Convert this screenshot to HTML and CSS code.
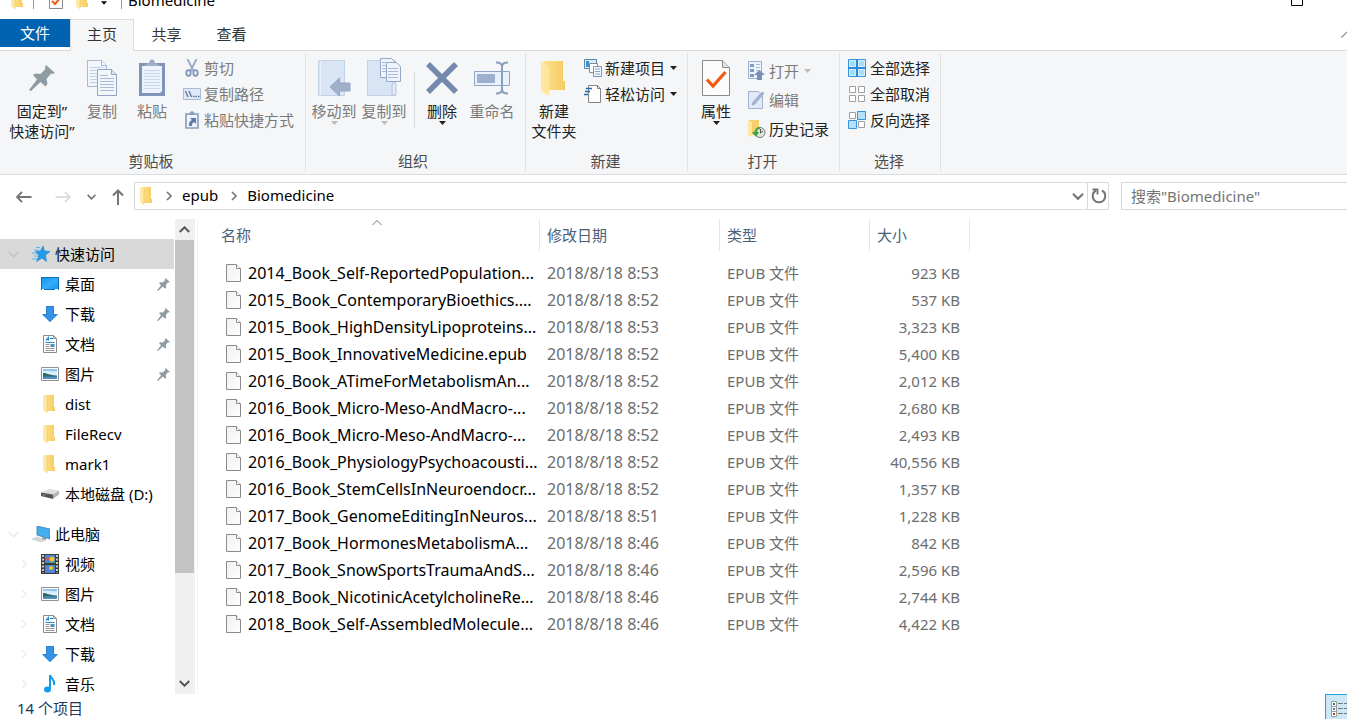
FILE: index.html
```
<!DOCTYPE html>
<html lang="zh-CN">
<head>
<meta charset="utf-8">
<title>Biomedicine</title>
<link rel="stylesheet" href="styles.css">
</head>
<body>
<svg class="sprite" aria-hidden="true">
  <defs>
    <linearGradient id="gold" x1="0" x2="1"><stop offset="0" stop-color="#ffe08a"/><stop offset="1" stop-color="#f4cc62"/></linearGradient>
    <linearGradient id="blue" x1="0" x2="1" y1="0" y2="1"><stop offset="0" stop-color="#0a93f0"/><stop offset=".5" stop-color="#35acf8"/><stop offset="1" stop-color="#1496f2"/></linearGradient>
    <linearGradient id="page" x1="0" x2="1" y1="0" y2="1"><stop offset="0" stop-color="#f0f1f2"/><stop offset="1" stop-color="#fdfdfd"/></linearGradient>
  </defs>
  <symbol id="folder" viewBox="0 0 12 18"><path d="M2 0h9v12h1v4H4z" fill="url(#gold)"/><path d="M0 0l4 2.500v15.500L0 15.500z" fill="#ffe9a6"/><path d="M4 2.500V18" stroke="#efc75c" stroke-width=".6"/></symbol>
  <symbol id="pin" viewBox="0 0 26 26"><path d="M17 0l9 8-2.500 1-1.500-.5-4.500 5.500 1 5-2 2.500-5-4.500L2 26l-2-1 8-10.500L4 10l2.500-1.500 5 .5 5-5-.5-2z" fill="#8f9ba3"/></symbol>
  <symbol id="file" viewBox="0 0 15 18"><path d="M.5.500h10l4 4v13H.500z" fill="url(#page)" stroke="#8b8b8b"/><path d="M10.500.500v4h4" fill="#fff" stroke="#8b8b8b"/></symbol>
  <symbol id="down" viewBox="0 0 16 16"><path d="M4 0h8v8h4l-8 8-8-8h4z" fill="#3393e6"/><path d="M4.500.500h7v8h3.500l-7 7-7-7h3.500z" fill="none" stroke="#2a80cd"/></symbol>
  <symbol id="doc" viewBox="0 0 16 18"><path d="M1.500.500h10l3 3v14h-13z" fill="#fff" stroke="#8c8c8c"/><path d="M11.500.500v3h3" fill="none" stroke="#8c8c8c"/><path d="M4 5.500l2.500-3v3M8 3.500h3M3.500 7.500h9" fill="none" stroke="#1e88da" stroke-width="1.200"/><path d="M3.500 9.500h4M3.500 11.500h4M3.500 13.500h9M3.500 15.500h9" stroke="#9a9a9a"/><path d="M8.500 9h4v3h-4z" fill="#4c8fb9"/></symbol>
  <symbol id="picture" viewBox="0 0 18 14"><path d="M.5.500h17v13H.500z" fill="#fff" stroke="#929292"/><path d="M2 2h14v10H2z" fill="#8cc3f2"/><path d="M2 4c6-1 9 1 14 0v4H2z" fill="#d9effd"/><path d="M2 6c4 0 6 2 14 3v2H2z" fill="#2f6b66"/><path d="M2 10c5-1 9 0 14-.5V12H2z" fill="#508fc2"/></symbol>
  <symbol id="copy" viewBox="0 0 30 36"><g fill="#f1f5fc" stroke="#a6b7d2"><path d="M.5.500h14l5 5v21H.500z"/><path d="M14.500.500v5h5"/></g><path d="M3 7.500h13M3 10.500h13M3 13.500h13M3 16.500h9M3 19.500h9M3 22.500h9" stroke="#c2d0e5"/><path d="M10.500 9.500h14l5 5v21h-19z" fill="#f1f5fc" stroke="#91a5c5"/><path d="M24.500 9.500v5h5" fill="#dbe5f4" stroke="#91a5c5"/><path d="M13 15.500h8M13 18.500h14M13 21.500h14M13 24.500h14M13 27.500h14M13 30.500h14" stroke="#aabbd6"/></symbol>
  <symbol id="check" viewBox="0 0 28 36"><path d="M.5.500h20l7 7v28H.500z" fill="#fcfcfc" stroke="#8a8a8a"/><path d="M20.500.500v7h7" fill="#e4e4e4" stroke="#8a8a8a"/><path d="M5 19.500l6 6.500L23.500 12" fill="none" stroke="#ee5a12" stroke-width="3.200"/></symbol>
  <symbol id="tri" viewBox="0 0 7 4"><path d="M0 0h7L3.500 4z" fill="currentColor"/></symbol>
  <symbol id="chev" viewBox="0 0 10 6"><path d="M.7.700L5 5 9.300.700" fill="none" stroke="currentColor" stroke-width="1.800"/></symbol>
  <symbol id="next" viewBox="0 0 6 10"><path d="M1 1l4 4-4 4" fill="none" stroke="currentColor" stroke-width="1.700"/></symbol>
</svg>

<div class="window">
  <header class="titlebar">
    <svg class="folder-sm"><use href="#folder"/></svg>
    <i class="bar"></i>
    <button class="plain" aria-label="属性"><svg width="14" height="18" viewBox="0 0 14 18"><path d="M.5.500h13v17H.500z" fill="#fcfcfc" stroke="#8a8a8a"/><path d="M3 10l3 3 5.500-6.500" fill="none" stroke="#ee5a12" stroke-width="2"/></svg></button>
    <button class="plain" aria-label="新建文件夹"><svg class="folder-sm"><use href="#folder"/></svg></button>
    <button class="plain" aria-label="自定义快速访问工具栏"><svg class="quick-tri"><use href="#tri"/></svg></button>
    <i class="bar bar-last"></i>
    <h1>Biomedicine</h1>
    <button class="plain maximize" aria-label="最大化"><svg width="12" height="12"><path d="M.5.500h11v11H.500z" fill="none" stroke="#000"/></svg></button>
  </header>

  <nav class="tabs">
    <button class="tab tab-file">文件</button>
    <button class="tab tab-active">主页</button>
    <button class="tab">共享</button>
    <button class="tab">查看</button>
    <button class="plain collapse" aria-label="最小化功能区"><svg width="12" height="7"><path d="M.5 6.500l6-6 6 6" fill="none" stroke="#888" stroke-width="1.200"/></svg></button>
  </nav>

  <section class="ribbon">
    <div class="group group-clip">
      <div class="tools">
        <button class="big big-wide"><span class="pic"><svg width="26" height="26"><use href="#pin"/></svg></span><span>固定到”<br>快速访问”</span></button>
        <button class="big dim"><span class="pic"><svg width="30" height="36"><use href="#copy"/></svg></span><span>复制</span></button>
        <button class="big dim"><span class="pic"><svg width="26" height="37" viewBox="0 0 26 37"><path d="M0 4h26v33H0z" fill="#8093b8"/><path d="M3 7h20v25l-2 2H3z" fill="#edf3fc"/><path d="M5 11.500h16M5 14.500h16M5 17.500h16M5 20.500h16M5 23.500h16M5 26.500h16M5 29.500h16" stroke="#ccd8ea"/><path d="M5 7l4-3h1a3 3 0 0 1 6 0h1l4 3z" fill="#a2afc9"/><circle cx="13" cy="2.500" r="2" fill="#98a7c3"/></svg></span><span>粘贴</span></button>
        <div class="small-list">
          <button class="small dim"><svg width="18" height="18" viewBox="0 0 18 18"><path d="M4.500 0L10.500 12M13.500 0L7.500 12" fill="none" stroke="#98a9c7" stroke-width="1.800"/><ellipse cx="5.500" cy="14" rx="2.200" ry="2.800" fill="none" stroke="#7f94b9" stroke-width="1.800"/><ellipse cx="12.500" cy="14" rx="2.200" ry="2.800" fill="none" stroke="#7f94b9" stroke-width="1.800"/></svg>剪切</button>
          <button class="small dim"><svg width="18" height="12" viewBox="0 0 18 12"><path d="M.5.500h17v11H.500z" fill="#dfe9f8" stroke="#a9bad5"/><path d="M2.500 3l2.500 6M6 3l2.500 6M10 8.500h1.500M12.500 8.500H14M15 8.500h1.500" stroke="#5f7597" stroke-width="1.300"/></svg>复制路径</button>
          <button class="small dim"><svg width="18" height="18" viewBox="0 0 18 18"><path d="M3 3h12v14H3z" fill="#edf3fc" stroke="#899bbd" stroke-width="1.600"/><path d="M6.500 1.500h5V4h-5z" fill="#899bbd"/><circle cx="9" cy="1.500" r="1.500" fill="#899bbd"/><path d="M6 15c0-4 1-5 3-6L7 7h6v6l-2-2c-2 1-2 2-2 4z" fill="#5d79a8"/></svg>粘贴快捷方式</button>
        </div>
      </div>
      <div class="group-name">剪贴板</div>
    </div>

    <div class="group group-pad">
      <div class="tools">
        <button class="big dim"><span class="pic"><svg width="33" height="38" viewBox="0 0 33 38"><path d="M.5 1.500h26v35H.500z" fill="#d9e4f4" stroke="#c3d1e6"/><path d="M2.500 2v34" stroke="#edf3fb"/><path d="M12 28l9.500-9v5H32v8H21.500v5z" fill="#a0b0cb" stroke="#95a7c5"/></svg></span><span>移动到</span><svg class="tri"><use href="#tri"/></svg></button>
        <button class="big dim"><span class="pic"><svg width="34" height="39" viewBox="0 0 34 39"><path d="M.5 2.500h28v35H.500z" fill="#d9e4f4" stroke="#c3d1e6"/><path d="M25 37V26l2-2 2 2v11z" fill="#e1eaf6" stroke="#b3c4dd"/><g fill="#eff4fc" stroke="#94a8c8"><path d="M13.500.500h11l4 4v15h-15z"/><path d="M19.500 4.500h10l4 4v15h-14z"/></g><path d="M21 10.500h10M21 13.500h10M21 16.500h10M21 19.500h10M15 4.500h5M15 7.500h4M15 10.500h4M15 13.500h4" stroke="#aabbd6"/></svg></span><span>复制到</span><svg class="tri"><use href="#tri"/></svg></button>
        <i class="tool-rule"></i>
        <button class="big"><span class="pic"><svg width="32" height="32" viewBox="0 0 32 32"><path d="M2 2l28 28M30 2L2 30" stroke="#7588ad" stroke-width="5.500"/></svg></span><span>删除</span><svg class="tri"><use href="#tri"/></svg></button>
        <button class="big dim"><span class="pic"><svg width="36" height="34" viewBox="0 0 36 34"><path d="M.5 10.500h35v14H.500z" fill="#e9f1fc" stroke="#90a4c4"/><path d="M3 13h18v9H3z" fill="#9fb0cc"/><path d="M22 1.500c4 0 6 1 6 4v23c0 3-2 4-6 4M34 1.500c-4 0-6 1-6 4v23c0 3 2 4 6 4" fill="none" stroke="#8b9ebf" stroke-width="2"/></svg></span><span>重命名</span></button>
      </div>
      <div class="group-name">组织</div>
    </div>

    <div class="group group-new">
      <div class="tools">
        <button class="big big-mid"><span class="pic"><svg width="26" height="36" viewBox="0 0 26 36"><path d="M3 1h19v20h2v9H8z" fill="url(#gold)"/><path d="M0 1l8 5v30l-8-5z" fill="#ffe69c"/></svg></span><span>新建<br>文件夹</span></button>
        <div class="small-list">
          <button class="small"><svg width="18" height="18" viewBox="0 0 18 18"><path d="M.5.500h12v9H.500z" fill="#d9ecfa" stroke="#5e87a5"/><path d="M2 2h3v6H2z" fill="#3d8fc5"/><path d="M5.500 4.500h8v9h-8z" fill="#fff" stroke="#8a8a8a"/><path d="M9.500 7.500h8v10h-8z" fill="#f5faff" stroke="#8193ae"/><path d="M11 10h5M11 12.500h5M11 15h5" stroke="#7aa4d0"/></svg>新建项目<svg class="tri-side"><use href="#tri"/></svg></button>
          <button class="small"><svg width="18" height="18" viewBox="0 0 18 18"><path d="M4.500.500h9l3 3v14h-12z" fill="#fff" stroke="#858585"/><path d="M13.500.500v3h3" fill="none" stroke="#858585"/><path d="M2 3.500h6M1 6.500h5M0 9.500h4" stroke="#1b6cb5" stroke-width="1.500"/></svg>轻松访问<svg class="tri-side"><use href="#tri"/></svg></button>
        </div>
      </div>
      <div class="group-name">新建</div>
    </div>

    <div class="group">
      <div class="tools">
        <button class="big big-mid"><span class="pic"><svg width="28" height="36"><use href="#check"/></svg></span><span>属性</span><svg class="tri"><use href="#tri"/></svg></button>
        <div class="small-list tall">
          <button class="small dim"><svg width="18" height="20" viewBox="0 0 18 20"><path d="M.5.500h13v17H.500z" fill="#edf3fc" stroke="#9cb0cf"/><path d="M2 3h4v3H2zM2 8h4v3H2zM2 13h4v3H2z" fill="#8298bd"/><path d="M8 3.500h4M8 6.500h4M8 9.500h3" stroke="#a8b9d4"/><path d="M11.500 9l5.500 5h-3v5H9v-5H6z" fill="#788fb7"/></svg>打开<svg class="tri-side"><use href="#tri"/></svg></button>
          <button class="small dim"><svg width="18" height="18" viewBox="0 0 18 18"><path d="M.5.500h10l4 4v13H.500z" fill="#e2eaf7" stroke="#9fb2cf"/><path d="M4 14l1-3L14 1l2 1.500L7 13z" fill="#a5b6d1" stroke="#8ca0c1" stroke-width=".6"/></svg>编辑</button>
          <button class="small"><svg width="18" height="18" viewBox="0 0 18 18"><path d="M1 0h10v15H4z" fill="#f5cf6c"/><path d="M0 0l4 2v15l-4-2z" fill="#ffe69c"/><circle cx="12" cy="12.500" r="5" fill="#e4e4e4" stroke="#777"/><path d="M12.500 9v4l2.500-2" fill="none" stroke="#555"/><path d="M12 7c-3 0-5 2-5 5H4l4 5 3-5H9c0-2 1-3 3-3z" fill="#3ba53d"/></svg>历史记录</button>
        </div>
      </div>
      <div class="group-name">打开</div>
    </div>

    <div class="group">
      <div class="tools tools-select">
        <div class="small-list">
          <button class="small"><svg width="18" height="18" viewBox="0 0 18 18"><path d="M.5.500h17v17H.500z" fill="#a9dcfb" stroke="#3793dc"/><path d="M9 0v18M0 9h18" stroke="#2b8bd8" stroke-width="2"/><path d="M1.500 1.500h6v6h-6zM10.500 1.500h6v6h-6zM1.500 10.500h6v6h-6zM10.500 10.500h6v6h-6z" fill="none" stroke="#d5effe"/></svg>全部选择</button>
          <button class="small"><svg width="18" height="18" viewBox="0 0 18 18"><path d="M1.500 1.500h6v6h-6zM10.500 1.500h6v6h-6zM1.500 10.500h6v6h-6zM10.500 10.500h6v6h-6z" fill="#fff" stroke="#a0a0a0"/></svg>全部取消</button>
          <button class="small"><svg width="18" height="18" viewBox="0 0 18 18"><path d="M1.500 1.500h6v6h-6zM10.500 10.500h6v6h-6z" fill="#fff" stroke="#a0a0a0"/><path d="M9.500.500h8v8h-8zM.5 9.500h8v8h-8z" fill="#b5e1fc" stroke="#3793dc"/></svg>反向选择</button>
        </div>
      </div>
      <div class="group-name">选择</div>
    </div>
  </section>

  <section class="location">
    <div class="history">
      <button class="plain" aria-label="后退"><svg width="16" height="12" viewBox="0 0 16 12"><path d="M6 1L1 6l5 5M1 6h14.500" fill="none" stroke="#747474" stroke-width="1.800"/></svg></button>
      <button class="plain forward" aria-label="前进"><svg width="16" height="12" viewBox="0 0 16 12"><path d="M10 1l5 5-5 5M15 6H.500" fill="none" stroke="#dedede" stroke-width="1.800"/></svg></button>
      <button class="plain grey" aria-label="最近位置"><svg width="9" height="6"><use href="#chev"/></svg></button>
      <button class="plain" aria-label="上移"><svg width="12" height="16" viewBox="0 0 12 16"><path d="M1 6.500l5-5 5 5M6 1.500V16" fill="none" stroke="#747474" stroke-width="2"/></svg></button>
    </div>
    <div class="address">
      <svg class="folder-sm"><use href="#folder"/></svg>
      <svg class="next"><use href="#next"/></svg>
      <button class="plain crumb">epub</button>
      <svg class="next"><use href="#next"/></svg>
      <button class="plain crumb">Biomedicine</button>
      <button class="plain grey expand" aria-label="展开"><svg width="12" height="7"><use href="#chev"/></svg></button>
      <button class="plain refresh" aria-label="刷新"><svg width="16" height="16" viewBox="0 0 16 16"><path d="M11 2.500a6.300 6.300 0 1 1-6 0" fill="none" stroke="#747474" stroke-width="2"/><path d="M1.500 1.500H6.500v5" fill="none" stroke="#747474" stroke-width="1.800"/></svg></button>
    </div>
    <input class="search" type="text" aria-label="搜索" placeholder='搜索"Biomedicine"'>
  </section>

  <main class="content">
    <aside class="side">
      <ul class="tree">
        <li><a class="node root selected" href="#"><svg class="fold" width="11" height="7"><use href="#chev"/></svg><svg width="18" height="16" viewBox="0 0 18 16"><path d="M11 0l1.500 5 5.500.5-4.500 3.500 1 6.500-4.500-3.500L4.500 15.500 7 9.500 3.500 5.500l5-.5z" fill="#239be9" stroke="#1a7ecb" stroke-width=".6"/><path d="M4 1.500h4M2 4h5M0 7h5M2 10h4M0 13h5" stroke="#5ab4ec"/></svg>快速访问</a></li>
        <li><a class="node" href="#"><svg width="18" height="14" viewBox="0 0 18 14"><path d="M0 0h18v13H0z" fill="url(#blue)"/><path d="M.5.500h17v12H.500z" fill="none" stroke="#0a70bd"/><path d="M1 12.500h2M14 12.500h3" stroke="#fff"/></svg>桌面<svg class="pinned"><use href="#pin"/></svg></a></li>
        <li><a class="node" href="#"><svg width="18" height="16"><use href="#down"/></svg>下载<svg class="pinned"><use href="#pin"/></svg></a></li>
        <li><a class="node" href="#"><svg width="18" height="18"><use href="#doc"/></svg>文档<svg class="pinned"><use href="#pin"/></svg></a></li>
        <li><a class="node" href="#"><svg width="18" height="14"><use href="#picture"/></svg>图片<svg class="pinned"><use href="#pin"/></svg></a></li>
        <li><a class="node" href="#"><svg class="tree-folder"><use href="#folder"/></svg>dist</a></li>
        <li><a class="node" href="#"><svg class="tree-folder"><use href="#folder"/></svg>FileRecv</a></li>
        <li><a class="node" href="#"><svg class="tree-folder"><use href="#folder"/></svg>mark1</a></li>
        <li><a class="node" href="#"><svg width="18" height="10" viewBox="0 0 18 10"><path d="M0 3.500L8 0l10 1.500-6 4z" fill="#dedede"/><path d="M0 3.500l12 2V10L0 7z" fill="#555"/><path d="M12 5.500l6-4v4L12 10z" fill="#b4b4b4"/><path d="M2 6h2" stroke="#57c557"/></svg>本地磁盘 (D:)</a></li>
        <li class="spaced"><a class="node root" href="#"><svg class="fold" width="11" height="7"><use href="#chev"/></svg><svg width="18" height="17" viewBox="0 0 18 17"><path d="M5 0l13 3v10L5 9z" fill="#44aef0" stroke="#3d7ba8" stroke-width=".8"/><path d="M11 11l3 1v2H9z" fill="#808b93"/><path d="M0 13l5-2 9 3-5 2z" fill="#d4d9dc" stroke="#b8bfc4" stroke-width=".5"/></svg>此电脑</a></li>
        <li><a class="node closed" href="#"><svg class="fold" width="6" height="10"><use href="#next"/></svg><svg width="18" height="20" viewBox="0 0 18 20"><path d="M0 0h18v20H0z" fill="#3b3b3b"/><path d="M2 1v18M16 1v18" stroke="#eee" stroke-width="1.600" stroke-dasharray="2 1.500"/><path d="M4 1h10v8H4zM4 11h10v8H4z" fill="#4e86d6"/><circle cx="11" cy="5" r="2.500" fill="#f0c42f"/><circle cx="6.500" cy="5" r="1.500" fill="#dd5144"/><circle cx="10" cy="14" r="2" fill="#f0c42f"/><path d="M8 8h6v1H8z" fill="#53a74b"/></svg>视频</a></li>
        <li><a class="node closed" href="#"><svg class="fold" width="6" height="10"><use href="#next"/></svg><svg width="18" height="14"><use href="#picture"/></svg>图片</a></li>
        <li><a class="node closed" href="#"><svg class="fold" width="6" height="10"><use href="#next"/></svg><svg width="18" height="18"><use href="#doc"/></svg>文档</a></li>
        <li><a class="node closed" href="#"><svg class="fold" width="6" height="10"><use href="#next"/></svg><svg width="18" height="16"><use href="#down"/></svg>下载</a></li>
        <li><a class="node closed" href="#"><svg class="fold" width="6" height="10"><use href="#next"/></svg><svg width="18" height="18" viewBox="0 0 18 18"><ellipse cx="6.500" cy="14.500" rx="3.500" ry="3" fill="#119cf0"/><path d="M9 15V0c1 4 5 4 4 10" fill="none" stroke="#119cf0" stroke-width="2"/></svg>音乐</a></li>
      </ul>
    </aside>
    <div class="scroll">
      <button class="plain scroll-end" aria-label="向上滚动"><svg class="flip" width="11" height="7"><use href="#chev"/></svg></button>
      <div class="track"><div class="thumb"></div></div>
      <button class="plain scroll-end" aria-label="向下滚动"><svg width="11" height="7"><use href="#chev"/></svg></button>
    </div>
    <div class="files">
      <table>
        <colgroup><col class="c-name"><col class="c-date"><col class="c-type"><col class="c-size"></colgroup>
        <thead><tr>
          <th class="name"><div class="head">名称<svg class="sort" width="10" height="5" viewBox="0 0 10 5"><path d="M.5 5L5 .500 9.500 5" fill="none" stroke="#777"/></svg></div></th>
          <th><div class="head">修改日期</div></th><th><div class="head">类型</div></th><th><div class="head">大小</div></th>
        </tr></thead>
        <tbody>
          <tr><td class="name"><svg class="file"><use href="#file"/></svg>2014_Book_Self-ReportedPopulation...</td><td class="date">2018/8/18 8:53</td><td>EPUB 文件</td><td class="size">923 KB</td></tr>
          <tr><td class="name"><svg class="file"><use href="#file"/></svg>2015_Book_ContemporaryBioethics....</td><td class="date">2018/8/18 8:52</td><td>EPUB 文件</td><td class="size">537 KB</td></tr>
          <tr><td class="name"><svg class="file"><use href="#file"/></svg>2015_Book_HighDensityLipoproteins...</td><td class="date">2018/8/18 8:53</td><td>EPUB 文件</td><td class="size">3,323 KB</td></tr>
          <tr><td class="name"><svg class="file"><use href="#file"/></svg>2015_Book_InnovativeMedicine.epub</td><td class="date">2018/8/18 8:52</td><td>EPUB 文件</td><td class="size">5,400 KB</td></tr>
          <tr><td class="name"><svg class="file"><use href="#file"/></svg>2016_Book_ATimeForMetabolismAn...</td><td class="date">2018/8/18 8:52</td><td>EPUB 文件</td><td class="size">2,012 KB</td></tr>
          <tr><td class="name"><svg class="file"><use href="#file"/></svg>2016_Book_Micro-Meso-AndMacro-...</td><td class="date">2018/8/18 8:52</td><td>EPUB 文件</td><td class="size">2,680 KB</td></tr>
          <tr><td class="name"><svg class="file"><use href="#file"/></svg>2016_Book_Micro-Meso-AndMacro-...</td><td class="date">2018/8/18 8:52</td><td>EPUB 文件</td><td class="size">2,493 KB</td></tr>
          <tr><td class="name"><svg class="file"><use href="#file"/></svg>2016_Book_PhysiologyPsychoacousti...</td><td class="date">2018/8/18 8:52</td><td>EPUB 文件</td><td class="size">40,556 KB</td></tr>
          <tr><td class="name"><svg class="file"><use href="#file"/></svg>2016_Book_StemCellsInNeuroendocr...</td><td class="date">2018/8/18 8:52</td><td>EPUB 文件</td><td class="size">1,357 KB</td></tr>
          <tr><td class="name"><svg class="file"><use href="#file"/></svg>2017_Book_GenomeEditingInNeuros...</td><td class="date">2018/8/18 8:51</td><td>EPUB 文件</td><td class="size">1,228 KB</td></tr>
          <tr><td class="name"><svg class="file"><use href="#file"/></svg>2017_Book_HormonesMetabolismA...</td><td class="date">2018/8/18 8:46</td><td>EPUB 文件</td><td class="size">842 KB</td></tr>
          <tr><td class="name"><svg class="file"><use href="#file"/></svg>2017_Book_SnowSportsTraumaAndS...</td><td class="date">2018/8/18 8:46</td><td>EPUB 文件</td><td class="size">2,596 KB</td></tr>
          <tr><td class="name"><svg class="file"><use href="#file"/></svg>2018_Book_NicotinicAcetylcholineRe...</td><td class="date">2018/8/18 8:46</td><td>EPUB 文件</td><td class="size">2,744 KB</td></tr>
          <tr><td class="name"><svg class="file"><use href="#file"/></svg>2018_Book_Self-AssembledMolecule...</td><td class="date">2018/8/18 8:46</td><td>EPUB 文件</td><td class="size">4,422 KB</td></tr>
        </tbody>
      </table>
    </div>
  </main>

  <footer class="status">
    <span class="count">14 个项目</span>
    <button class="plain view" aria-label="详细信息"><svg width="17" height="17" viewBox="0 0 17 17"><path d="M.5.500h5v5h-5zM.5 5.500h5v5h-5zM.5 10.500h5v5h-5z" fill="#fff" stroke="#9b9b9b"/><path d="M2 2h2v2H2z" fill="#35796f"/><path d="M2 7h2v2H2z" fill="#4e70b5"/><path d="M2 12h2v2H2z" fill="#b83a20"/><path d="M7 2.500h5M13 2.500h4M7 7.500h5M13 7.500h4M7 12.500h5M13 12.500h4" stroke="#777"/></svg></button>
  </footer>
</div>
</body>
</html>
```

FILE: styles.css
```
* { box-sizing: border-box; }
body {
  margin: 0;
  overflow: hidden;
  background: #fff;
  color: #000;
  font: 15px/20px "Noto Sans", "Noto Sans CJK SC", sans-serif;
  font-weight: 400;
}
button, input { font: inherit; color: inherit; }
button { border: 0; padding: 0; background: none; }
svg { display: block; flex: none; }
.sprite { position: absolute; width: 0; height: 0; }
.plain { display: flex; align-items: center; justify-content: center; }
.grey { color: #747474; }
.window { display: flex; flex-direction: column; height: 100vh; }

/* Title bar: its upper half lies above the viewport */
.titlebar { display: flex; flex: none; align-items: center; height: 30px; margin-top: -15px; padding: 0 44px 0 11px; }
.folder-sm { width: 12px; height: 18px; }
.titlebar h1 { margin: 0 auto 0 6px; font-size: 15px; font-weight: 400; }
.bar { width: 1px; height: 18px; margin: 0 15px 0 10px; background: #999; }
.bar-last { margin: 0 0 0 14px; }
.titlebar .plain + .plain { margin-left: 13px; }
.quick-tri { width: 6px; height: 4px; margin-top: 5px; }
.titlebar .maximize { margin: 0; }

.tabs { display: flex; flex: none; align-items: flex-start; height: 36px; padding-top: 4px; border-bottom: 1px solid #dadbdc; }
.tab { width: 65px; height: 30px; color: #333; }
.tab-file { width: 70px; height: 28px; background: #0063b1; color: #fff; }
.tab-active { width: 64px; height: 32px; padding-bottom: 3px; border: 1px solid #dadbdc; border-bottom: 0; background: #f5f6f7; }
.collapse { width: 6px; height: 30px; margin-left: auto; justify-content: flex-start; overflow: hidden; }

.ribbon { display: flex; flex: none; height: 124px; padding: 2px 0; background: #f5f6f7; border-bottom: 1px solid #dadbdc; color: #222; }
.group { display: flex; flex-direction: column; justify-content: space-between; border-right: 1px solid #e2e3e4; padding-right: 10px; }
.tools { display: flex; padding-top: 2px; }
.group-clip { padding-right: 11px; }
.group-clip .small-list { padding-left: 6px; }
.group-pad { padding: 0 8px 0 3px; }
.group-name { margin-right: -8px; padding-bottom: 1px; text-align: center; color: #4c4c4c; }
.group-pad .group-name { margin-right: 0; }
.big { display: flex; flex-direction: column; align-items: center; width: 50px; white-space: nowrap; }
.big-wide { width: 84px; padding-right: 6px; padding-left: 6px; margin-right: -7px; }
.big-mid { width: 56px; margin-right: -1px; }
.group-new .big-mid { margin-right: -3px; }
.pic { display: flex; align-items: center; justify-content: center; height: 46px; padding-bottom: 1px; }
.dim { color: #7a7a7a; }
.tri, .tri-side { width: 7px; height: 4px; }
.dim .tri, .dim .tri-side { color: #bbb; }
.tri-side { margin-left: 2px; }
.tool-rule { width: 1px; height: 56px; margin: 17px 2px 0 5px; background: #dadbdc; }
.small-list { display: flex; flex-direction: column; padding-left: 5px; }
.small { display: flex; align-items: center; gap: 3px; height: 26px; white-space: nowrap; }
.tall { padding-top: 1px; }
.tall .small { height: 29px; }
.tools-select .small-list { padding-left: 8px; }
.tools-select .small { gap: 4px; }

.location { display: flex; flex: none; align-items: flex-start; height: 44px; padding-top: 7px; }
.history { display: flex; align-items: center; gap: 16px; width: 134px; height: 28px; padding: 2px 0 0 16px; }
.forward { margin-left: 7px; }
.address { display: flex; align-items: center; flex: 1; height: 28px; border: 1px solid #d9d9d9; padding-left: 5px; }
.next { width: 6px; height: 10px; margin: 0 10px 0 14px; color: #777; }
.crumb { height: 26px; padding-bottom: 2px; }
.crumb + .next { margin-left: 13px; margin-right: 10px; }
.expand { margin-left: auto; width: 20px; height: 26px; padding-left: 1px; }
.refresh { width: 21px; height: 26px; padding-left: 1px; border-left: 1px solid #d9d9d9; }
.search { width: 226px; height: 28px; margin-left: 12px; padding: 0 9px; border: 1px solid #d9d9d9; border-right: 0; border-radius: 0; outline: 0; }
.search::placeholder { color: #757575; opacity: 1; }

.content { display: flex; flex: 1; min-height: 0; }
.side { width: 175px; padding: 20px 1px 0 0; overflow: hidden; }
.tree { list-style: none; margin: 0; padding: 0; }
.spaced { margin-top: 10px; }
.node { display: flex; align-items: center; gap: 6px; height: 30px; padding: 0 4px 0 41px; color: #000; text-decoration: none; white-space: nowrap; }
.root { padding-left: 8px; gap: 5px; }
.root .fold { margin-right: 8px; }
.closed { padding-left: 21px; }
.closed .fold { margin-right: 8px; }
.fold { color: #efefef; }
.selected { background: #d9d9d9; }
.selected .fold { color: #c8c8c8; }
.tree-folder { width: 12px; height: 18px; margin: 0 4px 0 2px; }
.pinned { width: 13px; height: 13px; margin-left: auto; }
.scroll { display: flex; flex-direction: column; width: 20px; background: #f0f0f0; color: #555; }
.scroll-end { height: 21px; padding-right: 1px; }
.track { flex: 1; }
.thumb { height: 77%; margin-right: 1px; background: #c4c4c4; }
.flip { transform: rotate(180deg); }
.files { flex: 1; min-width: 0; margin-left: 2px; border-left: 1px solid #f3f3f3; overflow: hidden; }

table { table-layout: fixed; width: 772px; border-collapse: collapse; color: #6d6d6d; }
.c-name { width: 342px; }
.c-date { width: 180px; }
.c-type { width: 150px; }
.c-size { width: 100px; }
th { padding: 0 0 8px; font-weight: 400; text-align: left; color: #4c607a; }
.head { position: relative; height: 32px; padding-left: 7px; border-right: 1px solid #e5e5e5; line-height: 32px; }
.name .head { padding-left: 23px; }
.sort { position: absolute; top: 1px; left: 51%; }
td { height: 27px; padding: 0 0 0 7px; white-space: nowrap; }
td.name { display: flex; align-items: center; gap: 7px; padding-left: 28px; color: #000; font-size: 16px; }
td.date { font-size: 16px; }
td.size { padding: 0 10px 0 0; text-align: right; }
.file { width: 15px; height: 18px; }

.status { display: flex; flex: none; height: 25px; align-items: center; justify-content: space-between; padding-left: 17px; color: #1e395b; }
.count { padding: 3px 12px 0 0; }
.view { width: 22px; height: 25px; padding: 5px 0 0 5px; justify-content: flex-start; overflow: hidden; background: #cce8f6; border: 1px solid #26a0da; border-width: 1px 0 0 1px; }
```
